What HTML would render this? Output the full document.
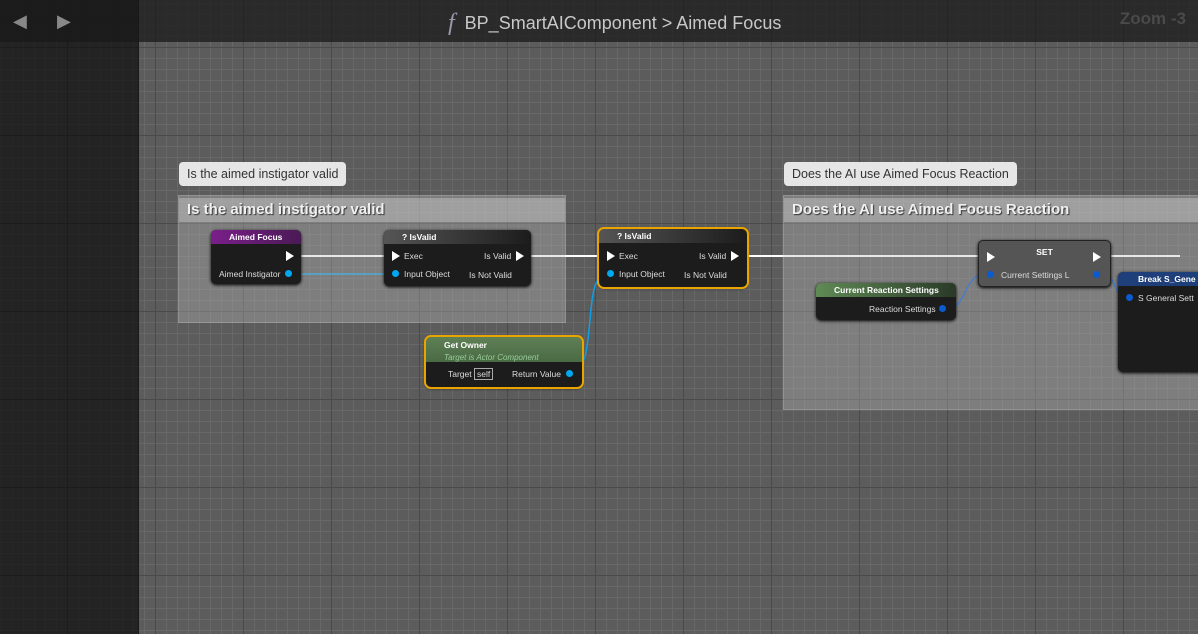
<!DOCTYPE html>
<html><head><style>
body{margin:0;width:1198px;height:634px;overflow:hidden;position:relative;font-family:"Liberation Sans",sans-serif;
background-color:#5c5c5c;
background-image:linear-gradient(#4a4a4a 1px,transparent 1px),linear-gradient(90deg,#4a4a4a 1px,transparent 1px),linear-gradient(#686868 1px,transparent 1px),linear-gradient(90deg,#686868 1px,transparent 1px);
background-size:88px 88px,88px 88px,11px 11px,11px 11px;background-position:0 47px,67px 0,0 3px,1px 0;}
.left{position:absolute;left:0;top:0;width:138px;height:634px;background:rgba(0,0,0,0.62);border-right:1px solid #1a1a1a}
.top{position:absolute;left:0;top:0;width:1198px;height:42px;background:rgba(25,25,25,0.75)}
.title{position:absolute;top:9px;left:448px;color:#c8c8c8;font-size:18px}
.zoom{position:absolute;right:12px;top:9px;color:#4a4a4a;font-size:17px;font-weight:bold}
.cbox{position:absolute;background:rgba(190,190,190,0.35);border:1px solid rgba(255,255,255,0.15)}
.chead{position:absolute;left:0;right:0;top:2px;height:24px;background:rgba(200,200,200,0.45);color:#f0f0f0;font-weight:bold;font-size:15px;line-height:24px;padding-left:8px;text-shadow:1px 1px 1px #333}
.bubble{position:absolute;background:#e6e6e6;color:#333;font-size:12.5px;padding:5px 8px;border-radius:4px}
.node{position:absolute;background:#1c1c1c;border-radius:5px;box-shadow:0 1px 3px #000;color:#ddd;font-size:8.5px;text-align:left}
.nh{height:14px;border-radius:5px 5px 0 0;color:#fff;font-weight:bold;font-size:8.5px;line-height:14px;padding-left:18px;text-align:left}
.sel{outline:2px solid #e8a500;outline-offset:0}
.t{position:absolute;white-space:nowrap}
.pin{position:absolute;width:7px;height:7px;border-radius:50%;background:#00a8f0}
.ex{position:absolute;width:0;height:0;border-top:5px solid transparent;border-bottom:5px solid transparent;border-left:8px solid #fff}
</style></head><body>
<div class="left"></div>
<div class="top"></div>
<div style="position:absolute;left:13px;top:11px;color:#888;font-size:18px">&#9664;</div>
<div style="position:absolute;left:57px;top:11px;color:#888;font-size:18px">&#9654;</div>
<div class="title"><i style="font-family:'Liberation Serif';color:#99a;font-size:24px;position:relative;top:1px">f</i>&nbsp;&nbsp;BP_SmartAIComponent &gt; Aimed Focus</div>
<div class="zoom">Zoom -3</div>

<svg style="position:absolute;left:0;top:0" width="1198" height="634">
<line x1="300" y1="256" x2="1180" y2="256" stroke="#fff" stroke-width="2"/>
<line x1="300" y1="274" x2="390" y2="274" stroke="#0ea0e6" stroke-width="1.5"/>
<path d="M570 373 C600 373 580 274 607 274" stroke="#0ea0e6" stroke-width="1.5" fill="none"/>
<path d="M945 309 C970 309 960 274 988 274" stroke="#0a5ad0" stroke-width="1.5" fill="none"/>
<path d="M1100 274 C1120 274 1110 297 1128 297" stroke="#0a5ad0" stroke-width="1.5" fill="none"/>
</svg>

<div class="bubble" style="left:179px;top:162px">Is the aimed instigator valid</div>
<div class="cbox" style="left:178px;top:195px;width:386px;height:126px"><div class="chead">Is the aimed instigator valid</div></div>
<div class="bubble" style="left:784px;top:162px">Does the AI use Aimed Focus Reaction</div>
<div class="cbox" style="left:783px;top:195px;width:415px;height:213px"><div class="chead">Does the AI use Aimed Focus Reaction</div></div>

<div class="node" style="left:211px;top:230px;width:90px;height:54px"><div class="nh" style="background:linear-gradient(90deg,#7a1f8a,#4a1a55)">Aimed Focus</div>
<div class="ex" style="left:75px;top:21px"></div><span class="t" style="left:8px;top:39px">Aimed Instigator</span><div class="pin" style="left:74px;top:40px"></div></div>

<div class="node" style="left:384px;top:230px;width:147px;height:56px"><div class="nh" style="background:linear-gradient(90deg,#555,#1c1c1c)">? IsValid</div>
<div class="ex" style="left:8px;top:21px"></div><span class="t" style="left:20px;top:21px">Exec</span><span class="t" style="left:100px;top:21px">Is Valid</span><div class="ex" style="left:132px;top:21px"></div>
<div class="pin" style="left:8px;top:40px"></div><span class="t" style="left:20px;top:39px">Input Object</span><span class="t" style="left:85px;top:40px">Is Not Valid</span></div>

<div class="node sel" style="left:599px;top:229px;width:148px;height:58px"><div class="nh" style="background:linear-gradient(90deg,#555,#1c1c1c)">? IsValid</div>
<div class="ex" style="left:8px;top:22px"></div><span class="t" style="left:20px;top:22px">Exec</span><span class="t" style="left:100px;top:22px">Is Valid</span><div class="ex" style="left:132px;top:22px"></div>
<div class="pin" style="left:8px;top:41px"></div><span class="t" style="left:20px;top:40px">Input Object</span><span class="t" style="left:85px;top:41px">Is Not Valid</span></div>

<div class="node sel" style="left:426px;top:337px;width:156px;height:50px"><div class="nh" style="background:linear-gradient(180deg,#5f7f55,#4a6a45);line-height:12px;padding-top:2px;box-sizing:border-box;height:25px">Get Owner<br><i style="font-weight:normal;color:#9c9;font-size:8px">Target is Actor Component</i></div>
<span class="t" style="left:22px;top:32px">Target <span style="border:1px solid #aaa;padding:0 2px">self</span></span><span class="t" style="left:86px;top:32px">Return Value</span><div class="pin" style="left:140px;top:33px"></div></div>

<div class="node" style="left:816px;top:283px;width:140px;height:37px"><div class="nh" style="background:linear-gradient(90deg,#5f8a55,#2a3a28)">Current Reaction Settings</div>
<span class="t" style="left:53px;top:21px">Reaction Settings</span><div class="pin" style="left:123px;top:22px;background:#0a5ad0"></div></div>

<div class="node" style="left:978px;top:240px;width:131px;height:45px;background:#555;border:1px solid #222">
<div style="text-align:center;color:#fff;font-weight:bold;margin-top:6px">SET</div>
<div class="ex" style="left:8px;top:11px"></div><div class="ex" style="left:114px;top:11px"></div>
<div class="pin" style="left:8px;top:30px;background:#0a5ad0"></div><span class="t" style="left:22px;top:29px">Current Settings L</span><div class="pin" style="left:114px;top:30px;background:#0a5ad0"></div></div>

<div class="node" style="left:1118px;top:272px;width:90px;height:100px"><div class="nh" style="background:#1f3f7a;padding-left:20px">Break S_Gene</div>
<div class="pin" style="left:8px;top:22px;background:#0a5ad0"></div><span class="t" style="left:20px;top:21px">S General Sett</span></div>
</body></html>
